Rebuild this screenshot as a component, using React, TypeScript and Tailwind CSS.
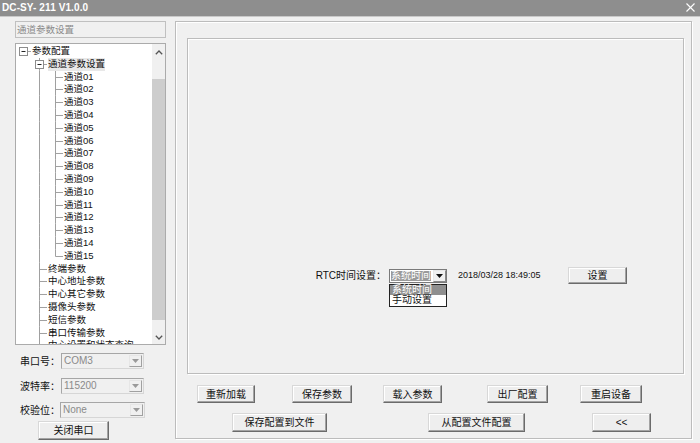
import React from 'react';

const FONT = "font-['Liberation_Sans','Noto_Sans_CJK_SC',sans-serif]";
const LINE = '#a0a0a0';

type CellT = 'none' | 'v' | 'tee' | 'ell' | 'box' | 'root';

function Cell({ t }: { t: CellT }) {
  return (
    <svg width="16" height="12.8" viewBox="0 0 16 12.8" className="block shrink-0">
      {(t === 'v' || t === 'tee' || t === 'box') && (
        <line x1="7.5" y1="0" x2="7.5" y2="12.8" stroke={LINE} />
      )}
      {t === 'ell' && <line x1="7.5" y1="0" x2="7.5" y2="6.5" stroke={LINE} />}
      {(t === 'tee' || t === 'ell') && <line x1="7.5" y1="6.5" x2="15" y2="6.5" stroke={LINE} />}
      {(t === 'box' || t === 'root') && (
        <>
          <line x1="11.5" y1="6.5" x2="15" y2="6.5" stroke={LINE} />
          <rect x="3.5" y="2.5" width="8" height="8" fill="#fff" stroke="#8c8c8c" />
          <line x1="5.5" y1="6.5" x2="9.5" y2="6.5" stroke="#222" />
        </>
      )}
    </svg>
  );
}

function Row({ cells, text, sel }: { cells: CellT[]; text: string; sel?: boolean }) {
  return (
    <div className="flex h-[12.8px] items-center">
      {cells.map((c, i) => (
        <Cell key={i} t={c} />
      ))}
      <span
        className={`whitespace-nowrap text-[9.5px] leading-[12.8px] text-[#111] ${sel ? 'bg-[#e8e8e8]' : ''}`}
      >
        {text}
      </span>
    </div>
  );
}

function Chevron({ up }: { up?: boolean }) {
  return (
    <svg width="8" height="5" viewBox="0 0 8 5" className="block">
      {up ? (
        <polyline points="0.8,4.2 4,1 7.2,4.2" fill="none" stroke="#555" strokeWidth="1.3" />
      ) : (
        <polyline points="0.8,0.8 4,4 7.2,0.8" fill="none" stroke="#555" strokeWidth="1.3" />
      )}
    </svg>
  );
}

function Tri({ color }: { color: string }) {
  return (
    <svg width="7" height="4" viewBox="0 0 7 4" className="block">
      <polygon points="0,0 7,0 3.5,4" fill={color} />
    </svg>
  );
}

function DisCombo({ value, wide }: { value: string; wide?: boolean }) {
  return (
    <div
      className={`h-[16px] border border-t-[#a6a6a6] border-l-[#a6a6a6] border-r-[#d6d6d6] border-b-[#d6d6d6] bg-[#f0f0f0] flex items-center ${wide ? 'w-[85px]' : 'w-[83px]'}`}
    >
      <span className="flex-1 pl-[2px] text-[10px] leading-[14px] text-[#8a8a8a]">{value}</span>
      <div className="mr-[1px] w-[13px] h-[12px] border border-t-[#e6e6e6] border-l-[#e6e6e6] border-r-[#a0a0a0] border-b-[#a0a0a0] flex items-center justify-center">
        <Tri color="#9a9a9a" />
      </div>
    </div>
  );
}

const BTN =
  'flex items-center justify-center text-[10px] text-[#111] bg-[#eeeeee] border border-t-[#d8d8d8] border-l-[#d8d8d8] border-r-[#6b6b6b] border-b-[#6b6b6b] shadow-[inset_-1px_-1px_0_#a3a3a3,inset_1px_1px_0_#ffffff] shrink-0';

const ETCH = 'border border-[#bcbcbc] shadow-[inset_1px_1px_0_#ffffff,1px_1px_0_#ffffff]';

export default function App() {
  const channels = Array.from({ length: 15 }, (_, i) => `通道${String(i + 1).padStart(2, '0')}`);
  const level1 = ['终端参数', '中心地址参数', '中心其它参数', '摄像头参数', '短信参数', '串口传输参数', '中心设置和状态查询'];

  return (
    <div className={`w-[700px] h-[443px] overflow-hidden bg-[#f0f0f0] flex flex-col ${FONT}`}>
      {/* title bar */}
      <div className="h-[16px] bg-[#8e8e8e] flex items-start shrink-0">
        <span className="pl-[2px] text-[10px] leading-[15px] font-bold text-white tracking-[0.1px]">
          DC-SY- 211 V1.0.0
        </span>
        <div className="ml-auto mr-[5px] mt-[3px]">
          <svg width="9" height="9" viewBox="0 0 9 9" className="block">
            <line x1="0.5" y1="0.5" x2="8.5" y2="8.5" stroke="#fff" strokeWidth="1.1" />
            <line x1="8.5" y1="0.5" x2="0.5" y2="8.5" stroke="#fff" strokeWidth="1.1" />
          </svg>
        </div>
      </div>
      <div className="h-[1px] bg-[#c9c9c9] shrink-0" />

      <div className="flex flex-1">
        {/* left column */}
        <div className="ml-[15px] w-[151px] flex flex-col shrink-0">
          <div className="mt-[4px] h-[17px] border border-[#c0c0c0] bg-[#f0f0f0] pl-[1px] text-[9.5px] leading-[15px] text-[#8a8a8a]">
            通道参数设置
          </div>

          <div className="mt-[5px] h-[302px] border border-[#ababab] bg-white flex">
            <div className="flex-1 overflow-hidden pt-[1px]">
              <Row cells={['root']} text="参数配置" />
              <Row cells={['none', 'box']} text="通道参数设置" sel />
              {channels.map((c, i) => (
                <Row key={c} cells={['none', 'v', i === channels.length - 1 ? 'ell' : 'tee']} text={c} />
              ))}
              {level1.map((t) => (
                <Row key={t} cells={['none', 'tee']} text={t} />
              ))}
            </div>
            <div className="w-[13px] flex flex-col bg-[#f0f0f0]">
              <div className="h-[17px] flex items-center justify-center">
                <Chevron up />
              </div>
              <div className="h-[18px]" />
              <div className="h-[241px] bg-[#cdcdcd]" />
              <div className="flex-1" />
              <div className="h-[17px] pt-[3px] flex items-center justify-center">
                <Chevron />
              </div>
            </div>
          </div>

          <div className="mt-[8px] h-[16px] flex items-center">
            <span className="w-[46px] pl-[5px] text-[10px] text-[#111] whitespace-nowrap">串口号：</span>
            <DisCombo value="COM3" />
          </div>
          <div className="mt-[9px] h-[16px] flex items-center">
            <span className="w-[46px] pl-[5px] text-[10px] text-[#111] whitespace-nowrap">波特率：</span>
            <DisCombo value="115200" />
          </div>
          <div className="mt-[8px] h-[16px] flex items-center">
            <span className="w-[45px] pl-[5px] text-[10px] text-[#111] whitespace-nowrap">校验位：</span>
            <DisCombo value="None" wide />
          </div>
          <div className={`mt-[3px] ml-[23px] w-[71px] h-[19px] ${BTN}`}>关闭串口</div>
        </div>

        {/* right outer group */}
        <div className={`ml-[9px] mt-[4px] w-[517px] h-[418px] flex flex-col shrink-0 ${ETCH}`}>
          <div className={`ml-[11px] mt-[16px] w-[497px] h-[336px] flex flex-col shrink-0 ${ETCH}`}>
            <div className="mt-[228px] h-[17px] flex items-center">
              <span className="w-[198px] text-right text-[10px] text-[#111] whitespace-nowrap">RTC时间设置：</span>
              <div className="relative ml-[3px] w-[58px] h-[14px] border border-[#7a7a7a] bg-white flex items-center">
                <div className="ml-[1px] w-[40px] h-[10px] bg-[#9a9a9a] text-white text-[10px] leading-[10px] whitespace-nowrap overflow-hidden">
                  系统时间
                </div>
                <div className="ml-auto w-[13px] h-[12px] border border-t-[#e8e8e8] border-l-[#e8e8e8] border-r-[#8a8a8a] border-b-[#8a8a8a] bg-[#f0f0f0] flex items-center justify-center">
                  <Tri color="#111" />
                </div>
                <div className="absolute left-[-1px] top-[14px] w-[58px] h-[23px] border border-[#222] bg-white flex flex-col">
                  <div className="h-[10.5px] bg-[#8f8f8f] pl-[2px] text-white text-[10px] leading-[10.5px] whitespace-nowrap">
                    系统时间
                  </div>
                  <div className="h-[10.5px] pl-[2px] text-[#111] text-[10px] leading-[10.5px] whitespace-nowrap">
                    手动设置
                  </div>
                </div>
              </div>
              <span className="ml-[11px] w-[110px] text-[9px] text-[#111] whitespace-nowrap">2018/03/28 18:49:05</span>
              <div className={`w-[59px] h-[17px] ${BTN}`}>设置</div>
            </div>
          </div>

          <div className="mt-[11px] h-[18px] flex">
            <div className={`ml-[21px] w-[58px] ${BTN}`}>重新加载</div>
            <div className={`ml-[37px] w-[60px] ${BTN}`}>保存参数</div>
            <div className={`ml-[31px] w-[59px] ${BTN}`}>载入参数</div>
            <div className={`ml-[45px] w-[61px] ${BTN}`}>出厂配置</div>
            <div className={`ml-[32px] w-[62px] ${BTN}`}>重启设备</div>
          </div>
          <div className="mt-[10px] h-[19px] flex">
            <div className={`ml-[56px] w-[95px] ${BTN}`}>保存配置到文件</div>
            <div className={`ml-[101px] w-[97px] ${BTN}`}>从配置文件配置</div>
            <div className={`ml-[67px] w-[59px] ${BTN}`}>&lt;&lt;</div>
          </div>
        </div>
      </div>
    </div>
  );
}
